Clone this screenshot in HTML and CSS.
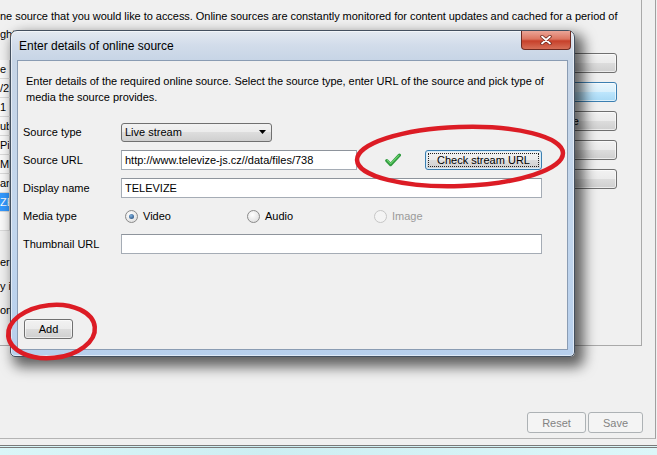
FILE: index.html
```html
<!DOCTYPE HTML>
<html>
<head>
<title>Online sources</title>
<link rel="stylesheet" href="styles.css">
</head>
<body>
<div class="screen">
  <div class="pane">
    <div class="box">
      <p class="intro">ne source that you would like to access. Online sources are constantly monitored for content updates and cached for a period of<br>ght take a moment for new content to appear on your device. For some of these you will need a plugin.</p>
      <div class="sources">
        <table class="list">
          <tr><td><div class="clip">e l</div></td><td></td></tr>
          <tr><td><div class="clip">/2</div></td><td></td></tr>
          <tr><td><div class="clip">1</div></td><td></td></tr>
          <tr><td><div class="clip">ube</div></td><td></td></tr>
          <tr><td><div class="clip">Pi</div></td><td></td></tr>
          <tr><td><div class="clip">Mo</div></td><td></td></tr>
          <tr><td><div class="clip">ant</div></td><td></td></tr>
          <tr class="sel"><td><div class="clip">ZE</div></td><td></td></tr>
          <tr><td><div class="clip">&nbsp;</div></td><td></td></tr>
        </table>
        <div class="details">
          <div>er</div>
          <div>y i</div>
          <div>onl</div>
        </div>
      </div>
      <div class="actions">
        <button class="btn">Add</button>
        <button class="btn hot">Edit</button>
        <button class="btn">Remove</button>
        <button class="btn">Up</button>
        <button class="btn">Down</button>
      </div>
    </div>
    <div class="footer">
      <button class="btn off reset">Reset</button>
      <button class="btn off save">Save</button>
    </div>
  </div>
  <div class="edge"></div>

  <div class="dialog">
    <div class="titlebar">
      <span class="title">Enter details of online source</span>
      <span class="close">
        <svg width="12" height="10" viewBox="0 0 12 10"><path d="M2 1.5 L10 8.5 M10 1.5 L2 8.5" stroke="#6b2419" stroke-width="3.4" stroke-linecap="round"/><path d="M2 1.5 L10 8.5 M10 1.5 L2 8.5" stroke="#fff" stroke-width="1.8" stroke-linecap="round"/></svg>
      </span>
    </div>
    <div class="inner">
      <p class="hint">Enter details of the required online source. Select the source type, enter URL of the source and pick type of<br>media the source provides.</p>
      <div class="form">
        <label>Source type</label>
        <div class="field">
          <div class="combo"><span>Live stream</span><svg width="7" height="4" viewBox="0 0 7 4"><path d="M0 0 H7 L3.5 4 Z" fill="#000"/></svg></div>
        </div>
        <label>Source URL</label>
        <div class="field">
          <input class="text url" value="http://www.televize-js.cz//data/files/738">
          <svg class="ok" width="16" height="14" viewBox="0 0 16 14"><path d="M1.8 7.6 L5.6 11.6 L14.4 2.2" fill="none" stroke="#2f9a3e" stroke-width="3.2" stroke-linecap="round" stroke-linejoin="round"/><path d="M2.4 7.4 L5.6 10.6 L13.8 2.4" fill="none" stroke="#6cd36f" stroke-width="1.2" stroke-linecap="round" stroke-linejoin="round"/></svg>
          <button class="btn focus check">Check stream URL</button>
        </div>
        <label>Display name</label>
        <div class="field"><input class="text wide" value="TELEVIZE"></div>
        <label>Media type</label>
        <div class="field radios">
          <span class="opt"><i class="radio on"></i>Video</span>
          <span class="opt"><i class="radio"></i>Audio</span>
          <span class="opt dis"><i class="radio"></i>Image</span>
        </div>
        <label>Thumbnail URL</label>
        <div class="field"><input class="text wide" value=""></div>
      </div>
      <button class="btn add">Add</button>
    </div>
  </div>

  <svg class="marks" width="657" height="455" viewBox="0 0 657 455">
    <ellipse cx="460" cy="156.5" rx="103" ry="29.5" transform="rotate(-2 460 156.5)" fill="none" stroke="#dc1c25" stroke-width="4.5"/>
    <ellipse cx="51.5" cy="331.5" rx="43.5" ry="26.5" transform="rotate(-6 51.5 331.5)" fill="none" stroke="#dc1c25" stroke-width="4.5"/>
  </svg>
</div>
</body>
</html>
```

FILE: styles.css
```css
body {margin: 0; font-family: "Liberation Sans", Arial, sans-serif; font-size: 11px; color: #000;}
.screen {position: relative; width: 657px; height: 455px; overflow: hidden; background: #f0f0f0; display: flex; flex-direction: column;}

/* background window */
.pane {height: 439px; box-sizing: border-box; width: 656px; border-right: 1px solid #a0a0a0; border-bottom: 1px solid #b4b4b4; display: flex; flex-direction: column;}
.box {width: 642px; height: 346px; box-sizing: border-box; border-right: 1px solid #a9a9a9; border-bottom: 1px solid #a9a9a9; padding: 7px 24px 0 0; display: grid; grid-template-columns: 1fr 117px; grid-template-rows: auto 1fr; column-gap: 12px;}
.intro {grid-column: 1 / 3; margin: 0; line-height: 18px; white-space: nowrap; letter-spacing: -0.04px;}
.sources {padding-top: 17px;}
.list {border-collapse: collapse; width: 100%; background: #fafafa;}
.list td {height: 18px; padding: 0; border-bottom: 1px solid #dadada; border-right: 1px solid #c8c8c8; padding-left: 4px;}
.list td:first-child {padding: 0; width: 9px;}
.clip {width: 9px; overflow: hidden; white-space: nowrap;}
.list .sel td {background: #3399ff; color: #fff;}
.details {margin-top: 19px; line-height: 24px;}
.actions {display: flex; flex-direction: column; gap: 9px; padding-top: 10px;}
.actions .btn {height: 20px;}
.footer {margin-top: auto; padding: 0 12px 5px 0; display: flex; justify-content: flex-end; gap: 2px;}
.reset {width: 59px; height: 21px;}
.save {width: 55px; height: 21px;}
.edge {margin-top: 6px; flex: 1; border-top: 3px double #7a7a7a; background: linear-gradient(to right, #daf6f8, #cdeef2 40%, #dcf7f9);}

/* buttons */
.btn {font: 11px "Liberation Sans", Arial, sans-serif; color: #000; padding: 0; border: 1px solid #707070; border-radius: 3px; background: linear-gradient(#f2f2f2 0%, #ebebeb 49%, #dddddd 50%, #cfcfcf 100%); box-shadow: inset 0 0 0 1px rgba(255,255,255,.6);}
.btn.hot {border-color: #3c7fb1; background: linear-gradient(#eaf6fd 0%, #d9f0fc 49%, #bee6fd 50%, #a7d9f5 100%);}
.btn.off {border-color: #adb2b5; background: #f4f4f4; color: #838383; box-shadow: none;}
.btn.focus {border-color: #3c7fb1; outline: 1px dotted #222; outline-offset: -4px; box-shadow: inset 0 0 0 1px #d8ecf8;}

/* dialog window */
.dialog {position: absolute; left: 10px; top: 30px; width: 565px; height: 327px; box-sizing: border-box; border: 1px solid #44505f; border-radius: 7px 7px 5px 5px; padding: 0 6px 6px 6px; display: flex; flex-direction: column; background: linear-gradient(#e4eaf1 0px, #d2dcea 14px, #c7d5e6 29px, #c2d6ed 60%, #b7cfec 100%); box-shadow: inset 0 0 0 1px rgba(255,255,255,.55), 6px 7px 13px 3px rgba(0,0,0,.6);}
.titlebar {height: 29px; display: flex; justify-content: space-between; align-items: flex-start;}
.title {font-size: 12px; margin: 8px 0 0 2px;}
.close {width: 48px; height: 18px; margin-right: -3px; border: 1px solid #6e2a21; border-top: 0; border-radius: 0 0 4px 4px; background: linear-gradient(#eba597 0%, #dc7560 45%, #c7402a 55%, #d66f57 100%); display: flex; align-items: center; justify-content: center;}
.inner {flex: 1; border: 1px solid #8a9cb3; background: #f0f0f0; display: flex; flex-direction: column; padding: 12px 0 10px 0;}
.hint {margin: 0; padding-left: 8px; line-height: 16px; white-space: nowrap; letter-spacing: -0.03px;}
.form {margin-top: 17px; display: grid; grid-template-columns: 103px auto; grid-auto-rows: 20px; row-gap: 8px; align-items: center;}
.form label {padding-left: 5px;}
.field {display: flex; align-items: center; height: 20px;}
.text {box-sizing: border-box; height: 20px; border: 1px solid #a5acb5; border-top-color: #8e949c; background: #fff; padding: 0 3px; font: 11px "Liberation Sans", Arial, sans-serif; color: #000;}
.url {width: 236px;}
.wide {width: 421px;}
.ok {margin-left: 28px;}
.check {margin-left: 24px; width: 117px; height: 20px;}
.combo {box-sizing: border-box; width: 151px; height: 19px; border: 1px solid #707070; border-radius: 3px; background: linear-gradient(#f2f2f2 0%, #ebebeb 49%, #dddddd 50%, #cfcfcf 100%); display: flex; align-items: center; justify-content: space-between; padding: 0 5px 0 3px;}
.radios {padding-left: 4px;}
.opt {display: flex; align-items: center; gap: 5px; width: 122px;}
.opt:nth-child(2) {width: 127px;}
.opt.dis {color: #9a9a9a;}
.radio {width: 11px; height: 11px; border-radius: 50%; border: 1px solid #8a8a8a; background: radial-gradient(circle at 40% 35%, #ffffff, #d8d8d8); display: flex; align-items: center; justify-content: center;}
.radio.on::after {content: ""; width: 5px; height: 5px; border-radius: 50%; background: radial-gradient(circle at 40% 35%, #7fb0de, #173f6e);}
.opt.dis .radio {border-color: #c6c6c6; background: #f4f4f4;}
.add {margin-top: auto; margin-left: 6px; width: 49px; height: 20px;}

.marks {position: absolute; left: 0; top: 0; pointer-events: none;}
```
